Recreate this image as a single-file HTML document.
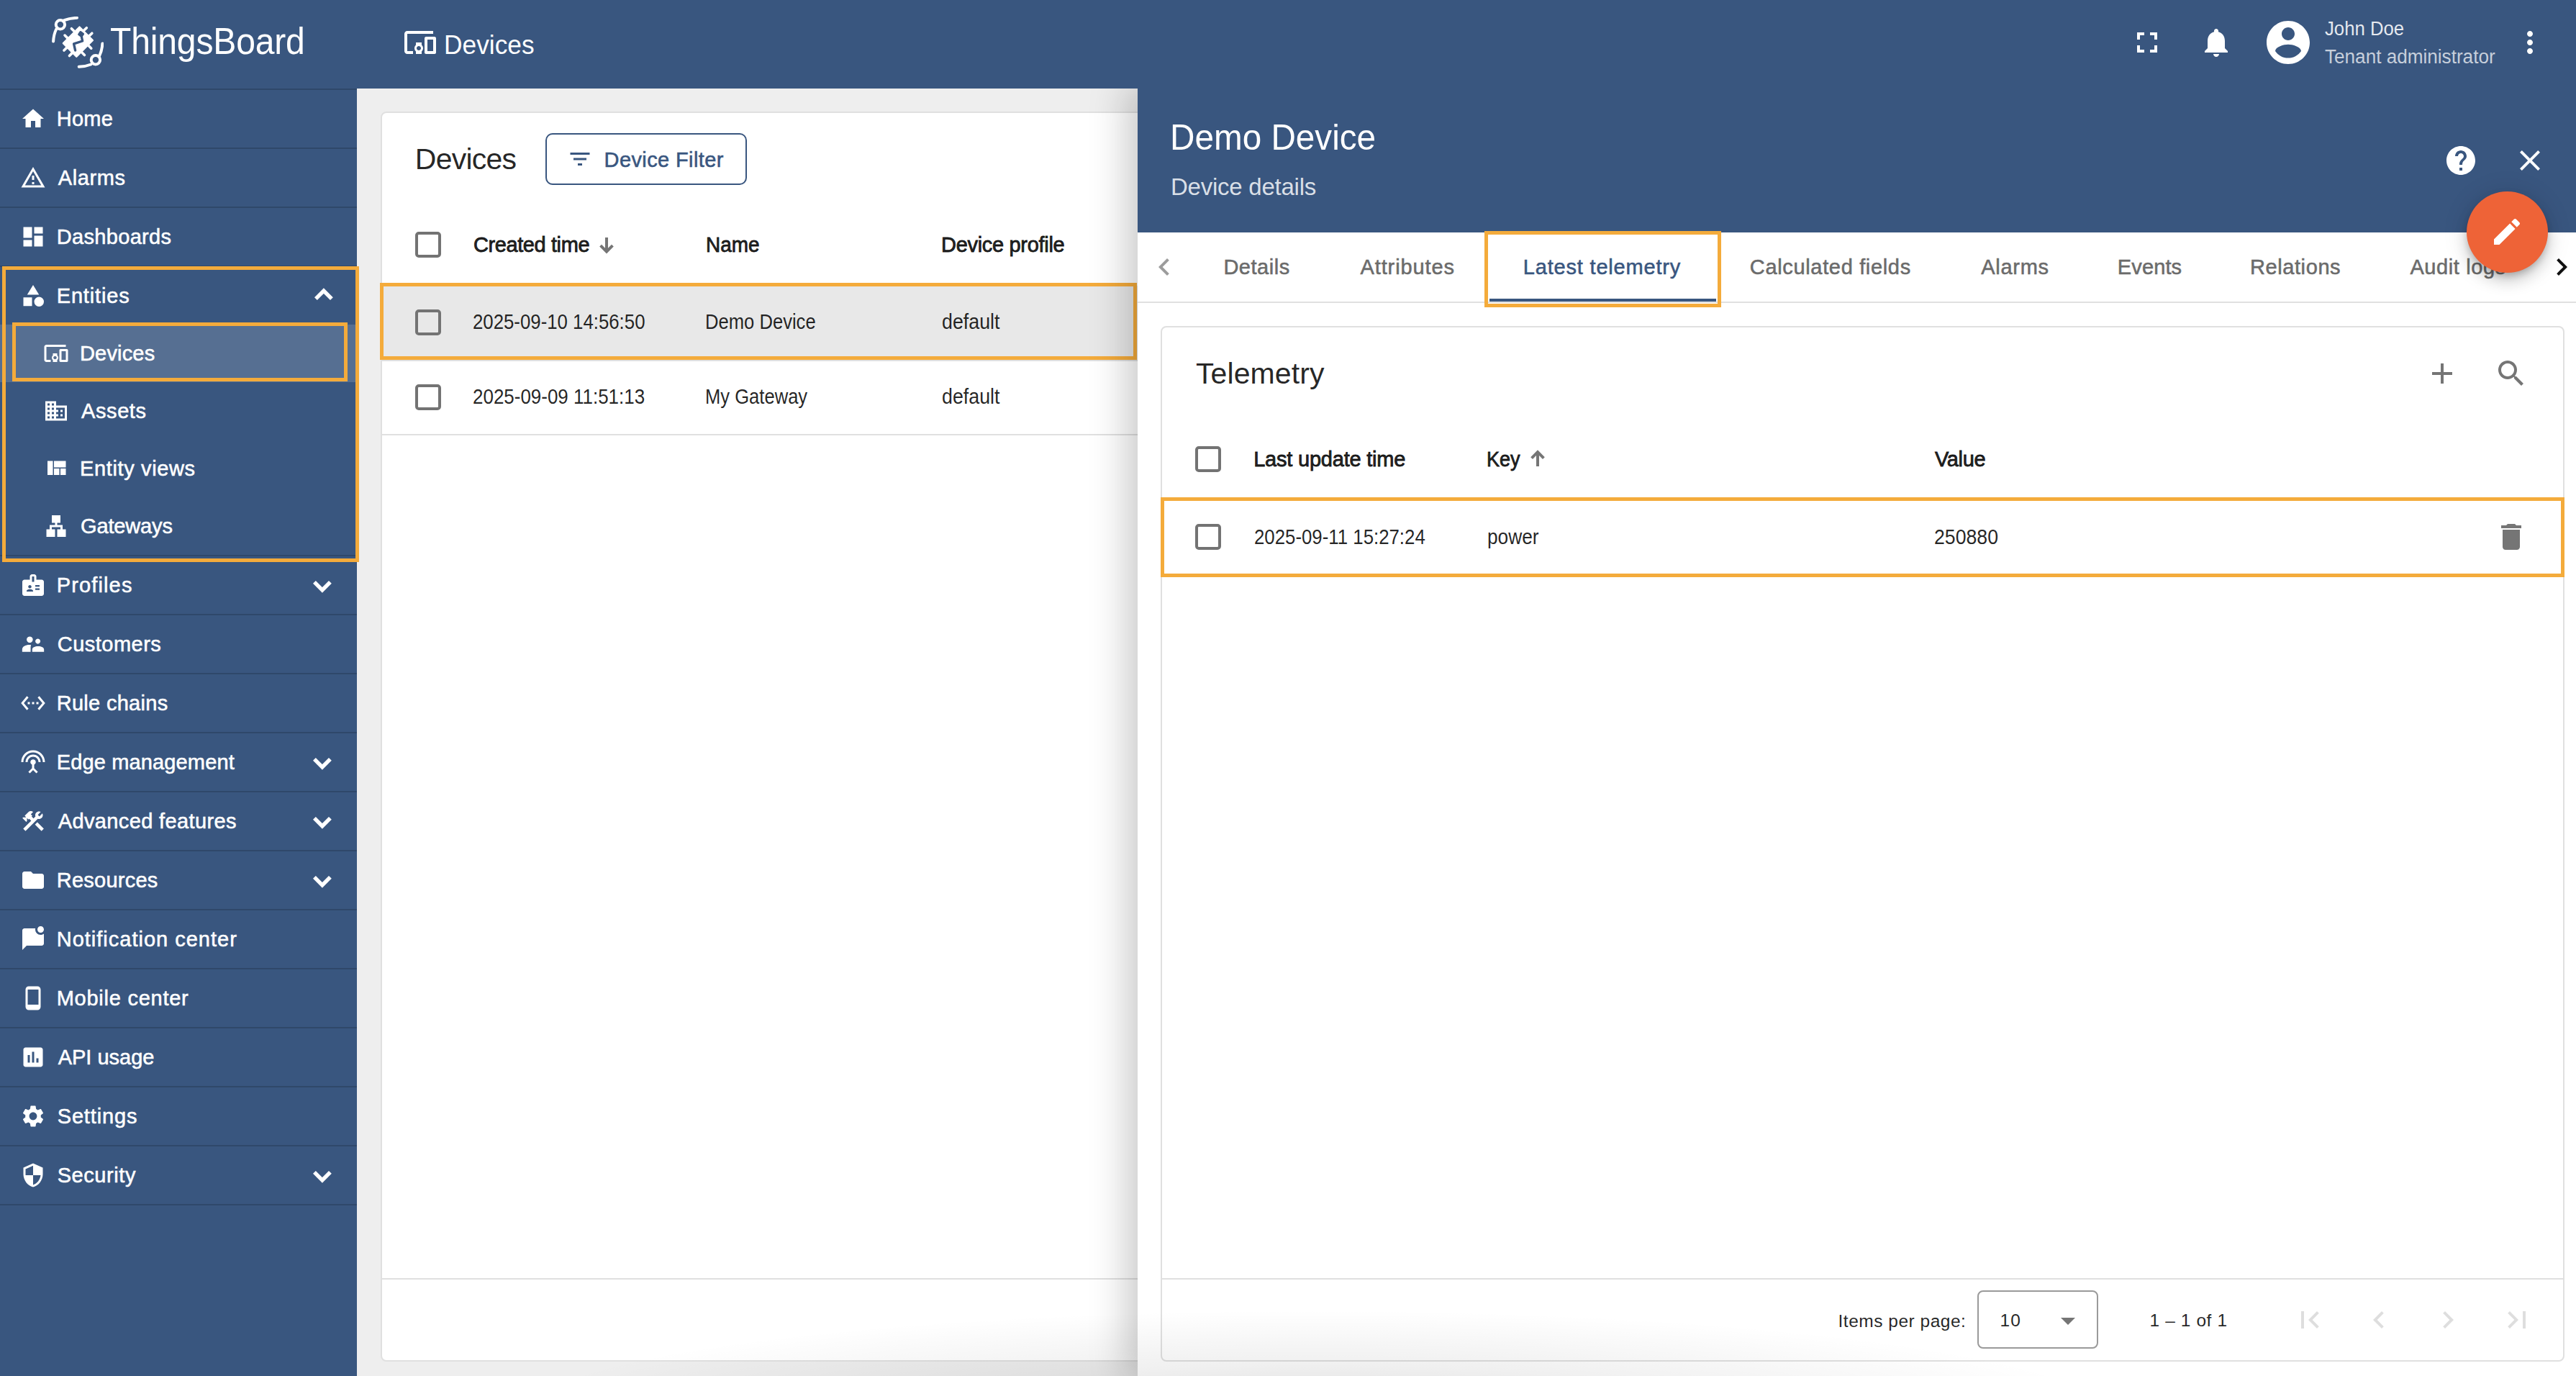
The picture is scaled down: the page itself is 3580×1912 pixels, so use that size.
<!DOCTYPE html>
<html><head><meta charset="utf-8"><title>ThingsBoard</title>
<style>
html,body{margin:0;padding:0;width:3580px;height:1912px;overflow:hidden;background:#eeeeee;}
body{position:relative;font-family:"Liberation Sans",sans-serif;}
.a{position:absolute;}
.t{position:absolute;white-space:nowrap;line-height:1;}
.med{-webkit-text-stroke:0.55px currentColor;}
.hd{-webkit-text-stroke:0.85px currentColor;}
svg{display:block;}
</style></head><body>
<div class="a" style="left:0;top:0;width:3580px;height:123px;z-index:5;">
<div class="a" style="left:0px;top:0px;width:3580px;height:123px;background:#39567f;"></div>
<svg class="a" style="left:72px;top:23px" width="72" height="72" viewBox="0 0 72 72">
<g fill="none" stroke="#fff" stroke-width="4" stroke-linecap="round">
<circle cx="11.9" cy="11.3" r="6.2"/>
<circle cx="60.9" cy="60.3" r="6.2"/>
<path d="M17.2 5.2 Q25 2.2 35 1.8"/>
<path d="M6.2 17.5 Q2.6 25 2.1 34.5"/>
<path d="M54.5 66.5 Q47 69.5 37.7 69.8"/>
<path d="M66.2 54.5 Q69.8 47 70.4 37.5"/>
</g>
<g transform="translate(36.4 35.1) rotate(-45)">
<rect x="-17.2" y="-14.2" width="34.4" height="28.4" rx="1.2" fill="#fff"/>
<g stroke="#fff" stroke-width="3.6" stroke-linecap="round">
<path d="M-6.6 -14 V-19.4 M6.6 -14 V-19.4 M-6.6 14 V19.4 M6.6 14 V19.4 M-17 -5.3 H-22.2 M-17 5.3 H-22.2 M17 -5.3 H22.2 M17 5.3 H22.2"/>
</g>
</g>
<g fill="none" stroke="#39567f" stroke-width="3.4" stroke-linejoin="round" stroke-linecap="round">
<path d="M41.2 27 L42.6 34 L30.6 37.8 L32.6 47"/>
</g>
<rect x="36.8" y="21" width="7.6" height="7" rx="1.6" transform="rotate(35 40.6 24.5)" fill="#39567f"/>
</svg>
<div class="t" style="left:153px;top:31.36px;font-size:52px;color:#fff;letter-spacing:-0.2px;transform:scaleX(0.925);transform-origin:0 0;">ThingsBoard</div>
<svg class="a" style="left:560px;top:35px;" width="48" height="48" viewBox="0 0 24 24"><path fill="#fff" d="M3 6h18V4H3c-1.1 0-2 .9-2 2v12c0 1.1.9 2 2 2h4v-2H3V6zm10 6H9v1.78c-.61.55-1 1.33-1 2.22s.39 1.67 1 2.22V20h4v-1.78c.61-.55 1-1.34 1-2.22s-.39-1.67-1-2.22V12zm-2 5.5c-.83 0-1.5-.67-1.5-1.5s.67-1.5 1.5-1.5 1.5.67 1.5 1.5-.67 1.5-1.5 1.5zM22 8h-6c-.5 0-1 .5-1 1v10c0 .5.5 1 1 1h6c.5 0 1-.5 1-1V9c0-.5-.5-1-1-1zm-1 10h-4v-8h4v8z"/></svg>
<div class="t" style="left:616.9000000000001px;top:43.88px;font-size:37px;color:#fff;transform:scaleX(0.9544);transform-origin:0 0;">Devices</div>
<svg class="a" style="left:2960px;top:35px;" width="48" height="48" viewBox="0 0 24 24"><path fill="#fff" d="M7 14H5v5h5v-2H7v-3zm-2-4h2V7h3V5H5v5zm12 7h-3v2h5v-5h-2v3zM14 5v2h3v3h2V5h-5z"/></svg>
<svg class="a" style="left:3055.6px;top:35px;" width="48" height="48" viewBox="0 0 24 24"><path fill="#fff" d="M12 22c1.1 0 2-.9 2-2h-4c0 1.1.89 2 2 2zm6-6v-5c0-3.07-1.64-5.64-4.5-6.32V4c0-.83-.67-1.5-1.5-1.5s-1.5.67-1.5 1.5v.68C7.63 5.36 6 7.92 6 11v5l-2 2v1h16v-1l-2-2z"/></svg>
<svg class="a" style="left:3144px;top:23px;" width="72" height="72" viewBox="0 0 24 24"><path fill="#fff" d="M12 2C6.48 2 2 6.48 2 12s4.48 10 10 10 10-4.48 10-10S17.52 2 12 2zm0 3c1.66 0 3 1.34 3 3s-1.34 3-3 3-3-1.34-3-3 1.34-3 3-3zm0 14.2c-2.5 0-4.71-1.28-6-3.22.03-1.99 4-3.08 6-3.08 1.99 0 5.97 1.09 6 3.08-1.29 1.94-3.5 3.22-6 3.22z"/></svg>
<div class="t" style="left:3231px;top:27.14px;font-size:27px;color:rgba(255,255,255,0.88);transform:scaleX(0.9533);transform-origin:0 0;">John Doe</div>
<div class="t" style="left:3231px;top:66.14px;font-size:27px;color:rgba(255,255,255,0.72);transform:scaleX(0.9673);transform-origin:0 0;">Tenant administrator</div>
<svg class="a" style="left:3492px;top:35px;" width="48" height="48" viewBox="0 0 24 24"><path fill="#fff" d="M12 8c1.1 0 2-.9 2-2s-.9-2-2-2-2 .9-2 2 .9 2 2 2zm0 2c-1.1 0-2 .9-2 2s.9 2 2 2 2-.9 2-2-.9-2-2-2zm0 6c-1.1 0-2 .9-2 2s.9 2 2 2 2-.9 2-2-.9-2-2-2z"/></svg>
</div>
<div class="a" style="left:0px;top:123px;width:496px;height:1789px;background:#39567f;"></div>
<div class="a" style="left:0px;top:123px;width:496px;height:2px;background:rgba(0,0,0,0.16);"></div>
<svg class="a" style="left:28px;top:147px;" width="36" height="36" viewBox="0 0 24 24"><path fill="#fff" d="M10 20v-6h4v6h5v-8h3L12 3 2 12h3v8z"/></svg>
<div class="t med" style="left:78.7px;top:151.45px;font-size:29px;color:#fff;letter-spacing:0.267px;">Home</div>
<div class="a" style="left:0px;top:205px;width:496px;height:2px;background:rgba(0,0,0,0.16);"></div>
<svg class="a" style="left:28px;top:229px;" width="36" height="36" viewBox="0 0 24 24"><path fill="#fff" d="M12 5.99L19.53 19H4.47L12 5.99M12 2L1 21h22L12 2zm1 14h-2v2h2v-2zm0-6h-2v4h2v-4z"/></svg>
<div class="t med" style="left:80.7px;top:233.45px;font-size:29px;color:#fff;letter-spacing:0.6px;">Alarms</div>
<div class="a" style="left:0px;top:287px;width:496px;height:2px;background:rgba(0,0,0,0.16);"></div>
<svg class="a" style="left:28px;top:311px;" width="36" height="36" viewBox="0 0 24 24"><path fill="#fff" d="M3 13h8V3H3v10zm0 8h8v-6H3v6zm10 0h8V11h-8v10zm0-18v6h8V3h-8z"/></svg>
<div class="t med" style="left:78.7px;top:315.45px;font-size:29px;color:#fff;letter-spacing:0.334px;">Dashboards</div>
<div class="a" style="left:0px;top:369px;width:496px;height:2px;background:rgba(0,0,0,0.16);"></div>
<svg class="a" style="left:28px;top:393px;" width="36" height="36" viewBox="0 0 24 24"><path fill="#fff" d="M12 2l-5.5 9h11zM17.5 13a4.5 4.5 0 1 0 0 9a4.5 4.5 0 1 0 0-9zM3 13.5h8v8H3z"/></svg>
<div class="t med" style="left:78.7px;top:397.45px;font-size:29px;color:#fff;letter-spacing:0.857px;">Entities</div>
<svg class="a" style="left:437px;top:400.1px" width="26" height="18" viewBox="0 0 26 18"><path d="M1.9 15.1L12.9 4.02L23.9 15.1" fill="none" stroke="#fff" stroke-width="5.4"/></svg>
<div class="a" style="left:0px;top:451px;width:496px;height:80px;background:rgba(255,255,255,0.15);"></div>
<svg class="a" style="left:60px;top:473px;" width="36" height="36" viewBox="0 0 24 24"><path fill="#fff" d="M3 6h18V4H3c-1.1 0-2 .9-2 2v12c0 1.1.9 2 2 2h4v-2H3V6zm10 6H9v1.78c-.61.55-1 1.33-1 2.22s.39 1.67 1 2.22V20h4v-1.78c.61-.55 1-1.34 1-2.22s-.39-1.67-1-2.22V12zm-2 5.5c-.83 0-1.5-.67-1.5-1.5s.67-1.5 1.5-1.5 1.5.67 1.5 1.5-.67 1.5-1.5 1.5zM22 8h-6c-.5 0-1 .5-1 1v10c0 .5.5 1 1 1h6c.5 0 1-.5 1-1V9c0-.5-.5-1-1-1zm-1 10h-4v-8h4v8z"/></svg>
<div class="t med" style="left:111px;top:477.45px;font-size:29px;color:#fff;letter-spacing:0.166px;">Devices</div>
<svg class="a" style="left:60px;top:553px;" width="36" height="36" viewBox="0 0 24 24"><path fill="#fff" d="M12 7V3H2v18h20V7H12zM6 19H4v-2h2v2zm0-4H4v-2h2v2zm0-4H4V9h2v2zm0-4H4V5h2v2zm4 12H8v-2h2v2zm0-4H8v-2h2v2zm0-4H8V9h2v2zm0-4H8V5h2v2zm10 12h-8v-2h2v-2h-2v-2h2v-2h-2V9h8v10zm-2-8h-2v2h2v-2zm0 4h-2v2h2v-2z"/></svg>
<div class="t med" style="left:113px;top:557.45px;font-size:29px;color:#fff;letter-spacing:0.6px;">Assets</div>
<svg class="a" style="left:60px;top:633px;" width="36" height="36" viewBox="0 0 24 24"><path fill="#fff" d="M10 18h5v-6h-5v6zm-6 0h5V5H4v13zm12 0h5v-6h-5v6zM10 5v6h11V5H10z"/></svg>
<div class="t med" style="left:111px;top:637.45px;font-size:29px;color:#fff;letter-spacing:0.636px;">Entity views</div>
<svg class="a" style="left:60px;top:713px;" width="36" height="36" viewBox="0 0 24 24"><path fill="#fff" d="M13 22h8v-7h-3v-4h-5V9h3V2H8v7h3v2H6v4H3v7h8v-7H8v-2h8v2h-3z"/></svg>
<div class="t med" style="left:112px;top:717.45px;font-size:29px;color:#fff;letter-spacing:-0.143px;">Gateways</div>
<div class="a" style="left:0px;top:771px;width:496px;height:2px;background:rgba(0,0,0,0.16);"></div>
<svg class="a" style="left:28px;top:795px;" width="36" height="36" viewBox="0 0 24 24"><path fill="#fff" d="M20 7h-5V4c0-1.1-.9-2-2-2h-2c-1.1 0-2 .9-2 2v3H4c-1.1 0-2 .9-2 2v11c0 1.1.9 2 2 2h16c1.1 0 2-.9 2-2V9c0-1.1-.9-2-2-2zM9 12c.83 0 1.5.67 1.5 1.5S9.83 15 9 15s-1.5-.67-1.5-1.5S8.17 12 9 12zm3 6H6v-.75c0-1 2-1.5 3-1.5s3 .5 3 1.5V18zm1-9h-2V4h2v5zm5 7.5h-4V15h4v1.5zm0-3h-4V12h4v1.5z"/></svg>
<div class="t med" style="left:78.7px;top:799.45px;font-size:29px;color:#fff;letter-spacing:1.143px;">Profiles</div>
<svg class="a" style="left:435px;top:806.8px" width="26" height="18" viewBox="0 0 26 18"><path d="M1.9 1.9L12.9 12.98L23.9 1.9" fill="none" stroke="#fff" stroke-width="5.4"/></svg>
<div class="a" style="left:0px;top:853px;width:496px;height:2px;background:rgba(0,0,0,0.16);"></div>
<svg class="a" style="left:28px;top:877px;" width="36" height="36" viewBox="0 0 24 24"><path fill="#fff" d="M8.9 4.95a2.85 2.85 0 1 0 0.001 0zM16.4 7.05a2.35 2.35 0 1 0 0.001 0zM1.9 19.2V16.9C1.9 14.3 5.1 12.7 8.5 12.7C9.1 12.7 9.6 12.75 10.1 12.85C9.85 13.4 9.7 14.2 9.7 15V19.2ZM11.2 19.2V16.9C11.2 15.2 13.6 14 16.65 14C19.7 14 22.1 15.2 22.1 16.9V19.2Z"/></svg>
<div class="t med" style="left:79.7px;top:881.45px;font-size:29px;color:#fff;letter-spacing:0.498px;">Customers</div>
<div class="a" style="left:0px;top:935px;width:496px;height:2px;background:rgba(0,0,0,0.16);"></div>
<svg class="a" style="left:28px;top:959px;" width="36" height="36" viewBox="0 0 24 24"><path fill="#fff" d="M7.77 6.76L6.23 5.48.82 12l5.41 6.52 1.54-1.28L3.42 12l4.35-5.24zM7 13h2v-2H7v2zm10-2h-2v2h2v-2zm-6 2h2v-2h-2v2zm6.77-7.52l-1.54 1.28L20.58 12l-4.35 5.24 1.54 1.28L23.18 12l-5.41-6.52z"/></svg>
<div class="t med" style="left:78.7px;top:963.45px;font-size:29px;color:#fff;letter-spacing:0.3px;">Rule chains</div>
<div class="a" style="left:0px;top:1017px;width:496px;height:2px;background:rgba(0,0,0,0.16);"></div>
<svg class="a" style="left:28px;top:1041px;" width="36" height="36" viewBox="0 0 24 24"><path fill="#fff" d="M12 5c-3.87 0-7 3.13-7 7h2c0-2.76 2.24-5 5-5s5 2.24 5 5h2c0-3.87-3.13-7-7-7zm1 9.29c.88-.39 1.5-1.26 1.5-2.29 0-1.38-1.12-2.5-2.5-2.5S9.5 10.62 9.5 12c0 1.02.62 1.9 1.5 2.29v3.3L7.59 21 9 22.41l3-3 3 3L16.41 21 13 17.59v-3.3zM12 1C5.93 1 1 5.93 1 12h2c0-4.97 4.03-9 9-9s9 4.03 9 9h2c0-6.07-4.93-11-11-11z"/></svg>
<div class="t med" style="left:78.7px;top:1045.45px;font-size:29px;color:#fff;letter-spacing:0.143px;">Edge management</div>
<svg class="a" style="left:435px;top:1052.8px" width="26" height="18" viewBox="0 0 26 18"><path d="M1.9 1.9L12.9 12.98L23.9 1.9" fill="none" stroke="#fff" stroke-width="5.4"/></svg>
<div class="a" style="left:0px;top:1099px;width:496px;height:2px;background:rgba(0,0,0,0.16);"></div>
<svg class="a" style="left:28px;top:1123px;" width="36" height="36" viewBox="0 0 24 24"><path fill="#fff" d="M13.78 15.17l2.12-2.12 6.01 6.01-2.12 2.12zM17.5 10c1.93 0 3.5-1.57 3.5-3.5 0-.58-.16-1.12-.41-1.6l-2.7 2.7-1.49-1.49 2.7-2.7c-.48-.25-1.02-.41-1.6-.41C15.57 3 14 4.57 14 6.5c0 .41.08.8.21 1.16l-1.85 1.85-1.78-1.78.71-.71-1.41-1.41L12 3.49c-1.17-1.17-3.07-1.17-4.24 0L4.22 7.03l1.41 1.41H2.81l-.71.71 3.54 3.54.71-.71V9.15l1.41 1.41.71-.71 1.78 1.78-7.41 7.41 2.12 2.12L16.34 9.79c.36.13.75.21 1.16.21z"/></svg>
<div class="t med" style="left:80.7px;top:1127.45px;font-size:29px;color:#fff;letter-spacing:0.375px;">Advanced features</div>
<svg class="a" style="left:435px;top:1134.8px" width="26" height="18" viewBox="0 0 26 18"><path d="M1.9 1.9L12.9 12.98L23.9 1.9" fill="none" stroke="#fff" stroke-width="5.4"/></svg>
<div class="a" style="left:0px;top:1181px;width:496px;height:2px;background:rgba(0,0,0,0.16);"></div>
<svg class="a" style="left:28px;top:1205px;" width="36" height="36" viewBox="0 0 24 24"><path fill="#fff" d="M10 4H4c-1.1 0-1.99.9-1.99 2L2 18c0 1.1.9 2 2 2h16c1.1 0 2-.9 2-2V8c0-1.1-.9-2-2-2h-8l-2-2z"/></svg>
<div class="t med" style="left:78.7px;top:1209.45px;font-size:29px;color:#fff;letter-spacing:0.25px;">Resources</div>
<svg class="a" style="left:435px;top:1216.8px" width="26" height="18" viewBox="0 0 26 18"><path d="M1.9 1.9L12.9 12.98L23.9 1.9" fill="none" stroke="#fff" stroke-width="5.4"/></svg>
<div class="a" style="left:0px;top:1263px;width:496px;height:2px;background:rgba(0,0,0,0.16);"></div>
<svg class="a" style="left:28px;top:1287px;" width="36" height="36" viewBox="0 0 24 24"><path fill="#fff" d="M22 6.98V16c0 1.1-.9 2-2 2H6l-4 4V4c0-1.1.9-2 2-2h10.1c-.06.32-.1.66-.1 1 0 2.76 2.24 5 5 5 1.13 0 2.16-.39 3-1.02zM16 3c0 1.66 1.34 3 3 3s3-1.34 3-3-1.34-3-3-3-3 1.34-3 3z"/></svg>
<div class="t med" style="left:78.7px;top:1291.45px;font-size:29px;color:#fff;letter-spacing:1.0px;">Notification center</div>
<div class="a" style="left:0px;top:1345px;width:496px;height:2px;background:rgba(0,0,0,0.16);"></div>
<svg class="a" style="left:28px;top:1369px;" width="36" height="36" viewBox="0 0 24 24"><path fill="#fff" d="M16 1H8C6.34 1 5 2.34 5 4v16c0 1.66 1.34 3 3 3h8c1.66 0 3-1.34 3-3V4c0-1.66-1.34-3-3-3zm1 17H7V4h10v14z"/></svg>
<div class="t med" style="left:78.7px;top:1373.45px;font-size:29px;color:#fff;letter-spacing:0.75px;">Mobile center</div>
<div class="a" style="left:0px;top:1427px;width:496px;height:2px;background:rgba(0,0,0,0.16);"></div>
<svg class="a" style="left:28px;top:1451px;" width="36" height="36" viewBox="0 0 24 24"><path fill="#fff" d="M19 3H5c-1.1 0-2 .9-2 2v14c0 1.1.9 2 2 2h14c1.1 0 2-.9 2-2V5c0-1.1-.9-2-2-2zM9 17H7v-7h2v7zm4 0h-2V7h2v10zm4 0h-2v-4h2v4z"/></svg>
<div class="t med" style="left:80.7px;top:1455.45px;font-size:29px;color:#fff;">API usage</div>
<div class="a" style="left:0px;top:1509px;width:496px;height:2px;background:rgba(0,0,0,0.16);"></div>
<svg class="a" style="left:28px;top:1533px;" width="36" height="36" viewBox="0 0 24 24"><path fill="#fff" d="M19.14 12.94c.04-.3.06-.61.06-.94 0-.32-.02-.64-.07-.94l2.03-1.58c.18-.14.23-.41.12-.61l-1.92-3.32c-.12-.22-.37-.29-.59-.22l-2.39.96c-.5-.38-1.03-.7-1.62-.94l-.36-2.54c-.04-.24-.24-.41-.48-.41h-3.84c-.24 0-.43.17-.47.41l-.36 2.54c-.59.24-1.13.57-1.62.94l-2.39-.96c-.22-.08-.47 0-.59.22L2.74 8.87c-.12.21-.08.47.12.61l2.03 1.58c-.05.3-.09.63-.09.94s.02.64.07.94l-2.03 1.58c-.18.14-.23.41-.12.61l1.92 3.32c.12.22.37.29.59.22l2.39-.96c.5.38 1.03.7 1.62.94l.36 2.54c.05.24.24.41.48.41h3.84c.24 0 .44-.17.47-.41l.36-2.54c.59-.24 1.13-.56 1.62-.94l2.39.96c.22.08.47 0 .59-.22l1.92-3.32c.12-.22.07-.47-.12-.61l-2.01-1.58zM12 15.6c-1.98 0-3.6-1.62-3.6-3.6s1.62-3.6 3.6-3.6 3.6 1.62 3.6 3.6-1.62 3.6-3.6 3.6z"/></svg>
<div class="t med" style="left:79.7px;top:1537.45px;font-size:29px;color:#fff;letter-spacing:0.857px;">Settings</div>
<div class="a" style="left:0px;top:1591px;width:496px;height:2px;background:rgba(0,0,0,0.16);"></div>
<svg class="a" style="left:28px;top:1615px;" width="36" height="36" viewBox="0 0 24 24"><path fill="#fff" d="M12 1L3 5v6c0 5.55 3.84 10.74 9 12 5.16-1.26 9-6.45 9-12V5l-9-4zm0 10.99h7c-.53 4.12-3.28 7.79-7 8.94V12H5V6.3l7-3.11v8.8z"/></svg>
<div class="t med" style="left:79.7px;top:1619.45px;font-size:29px;color:#fff;letter-spacing:0.572px;">Security</div>
<svg class="a" style="left:435px;top:1626.8px" width="26" height="18" viewBox="0 0 26 18"><path d="M1.9 1.9L12.9 12.98L23.9 1.9" fill="none" stroke="#fff" stroke-width="5.4"/></svg>
<div class="a" style="left:0px;top:1673px;width:496px;height:2px;background:rgba(0,0,0,0.16);"></div>
<div class="a" style="left:529px;top:155px;width:1200px;height:1737px;background:#fff;border:2px solid #e0e0e0;border-radius:8px;box-sizing:border-box;"></div>
<div class="t" style="left:576.8px;top:201.04px;font-size:41px;color:rgba(0,0,0,0.87);letter-spacing:-0.767px;">Devices</div>
<div class="a" style="left:758px;top:185px;width:280px;height:72px;border:2px solid #39567f;border-radius:10px;box-sizing:border-box;"></div>
<svg class="a" style="left:788.4px;top:202.7px;" width="36" height="36" viewBox="0 0 24 24"><path fill="#39567f" d="M10 18h4v-2h-4v2zM3 6v2h18V6H3zm3 7h12v-2H6v2z"/></svg>
<div class="t med" style="left:839.5999999999999px;top:207.55px;font-size:29px;color:#39567f;letter-spacing:0.382px;">Device Filter</div>
<div class="a" style="left:576.5px;top:322px;width:36px;height:36px;border:4px solid #737373;border-radius:5px;box-sizing:border-box;"></div>
<div class="t hd" style="left:658px;top:326.45px;font-size:29px;color:rgba(0,0,0,0.87);letter-spacing:-0.41px;">Created time</div>
<svg class="a" style="left:833px;top:329px" width="20" height="24" viewBox="0 0 20 24"><path d="M10 1V20M1.6 12.2L10 20.6L18.4 12.2" fill="none" stroke="#757575" stroke-width="4"/></svg>
<div class="t hd" style="left:981.0px;top:326.45px;font-size:29px;color:rgba(0,0,0,0.87);transform:scaleX(0.9626);transform-origin:0 0;">Name</div>
<div class="t hd" style="left:1308px;top:326.45px;font-size:29px;color:rgba(0,0,0,0.87);letter-spacing:-0.308px;">Device profile</div>
<div class="a" style="left:531px;top:397px;width:1050px;height:103px;background:#e8e8e8;"></div>
<div class="a" style="left:531px;top:500px;width:1050px;height:2px;background:#e0e0e0;"></div>
<div class="a" style="left:531px;top:603px;width:1050px;height:2px;background:#e0e0e0;"></div>
<div class="a" style="left:576.5px;top:430px;width:36px;height:36px;border:4px solid #737373;border-radius:5px;box-sizing:border-box;"></div>
<div class="t" style="left:657.0px;top:433.45px;font-size:29px;color:rgba(0,0,0,0.87);transform:scaleX(0.8893);transform-origin:0 0;">2025-09-10 14:56:50</div>
<div class="t" style="left:980.3000000000001px;top:433.45px;font-size:29px;color:rgba(0,0,0,0.87);transform:scaleX(0.8828);transform-origin:0 0;">Demo Device</div>
<div class="t" style="left:1309px;top:433.45px;font-size:29px;color:rgba(0,0,0,0.87);transform:scaleX(0.9242);transform-origin:0 0;">default</div>
<div class="a" style="left:576.5px;top:534px;width:36px;height:36px;border:4px solid #737373;border-radius:5px;box-sizing:border-box;"></div>
<div class="t" style="left:657.0px;top:537.45px;font-size:29px;color:rgba(0,0,0,0.87);transform:scaleX(0.8952);transform-origin:0 0;">2025-09-09 11:51:13</div>
<div class="t" style="left:980.3000000000001px;top:537.45px;font-size:29px;color:rgba(0,0,0,0.87);transform:scaleX(0.882);transform-origin:0 0;">My Gateway</div>
<div class="t" style="left:1309px;top:537.45px;font-size:29px;color:rgba(0,0,0,0.87);transform:scaleX(0.9242);transform-origin:0 0;">default</div>
<div class="a" style="left:531px;top:1776px;width:1050px;height:2px;background:#e0e0e0;"></div>
<div class="a" style="left:527.5px;top:393px;width:1052px;height:107px;border:5px solid #f4ab3b;box-sizing:border-box;"></div>
<div class="a" style="left:1581px;top:123px;width:1999px;height:1789px;background:#fff;box-shadow:-8px 0 50px 6px rgba(0,0,0,0.22);"></div>
<div class="a" style="left:1581px;top:123px;width:1999px;height:200px;background:#39567f;"></div>
<div class="t" style="left:1626px;top:165.68px;font-size:50px;color:#fff;transform:scaleX(0.9533);transform-origin:0 0;">Demo Device</div>
<div class="t" style="left:1627px;top:243.17px;font-size:33px;color:rgba(255,255,255,0.82);letter-spacing:-0.244px;">Device details</div>
<svg class="a" style="left:3396px;top:199px;" width="48" height="48" viewBox="0 0 24 24"><path fill="#fff" d="M12 2C6.48 2 2 6.48 2 12s4.48 10 10 10 10-4.48 10-10S17.52 2 12 2zm1 17h-2v-2h2v2zm2.07-7.75l-.9.92C13.45 12.9 13 13.5 13 15h-2v-.5c0-1.1.45-2.1 1.17-2.83l1.24-1.26c.37-.36.59-.86.59-1.41 0-1.1-.9-2-2-2s-2 .9-2 2H8c0-2.21 1.79-4 4-4s4 1.79 4 4c0 .88-.36 1.68-.93 2.25z"/></svg>
<svg class="a" style="left:3492.3px;top:199px;" width="48" height="48" viewBox="0 0 24 24"><path fill="#fff" d="M19 6.41L17.59 5 12 10.59 6.41 5 5 6.41 10.59 12 5 17.59 6.41 19 12 13.41 17.59 19 19 17.59 13.41 12z"/></svg>
<div class="a" style="left:1581px;top:419px;width:1999px;height:2px;background:#e0e0e0;"></div>
<svg class="a" style="left:1593.7px;top:347px;" width="48" height="48" viewBox="0 0 24 24"><path fill="#9c9c9c" d="M15.41 7.41L14 6l-6 6 6 6 1.41-1.41L10.83 12z"/></svg>
<div class="t med" style="left:1700.4px;top:356.83px;font-size:29px;color:#6b6b6b;letter-spacing:0.534px;">Details</div>
<div class="t med" style="left:1890.5px;top:356.83px;font-size:29px;color:#6b6b6b;letter-spacing:0.889px;">Attributes</div>
<div class="t med" style="left:2116.8px;top:356.83px;font-size:29px;color:#39567f;letter-spacing:0.813px;">Latest telemetry</div>
<div class="t med" style="left:2431.8px;top:356.83px;font-size:29px;color:#6b6b6b;letter-spacing:0.661px;">Calculated fields</div>
<div class="t med" style="left:2753.2px;top:356.83px;font-size:29px;color:#6b6b6b;letter-spacing:0.72px;">Alarms</div>
<div class="t med" style="left:2942.8px;top:356.83px;font-size:29px;color:#6b6b6b;letter-spacing:0.12px;">Events</div>
<div class="t med" style="left:3126.8999999999996px;top:356.83px;font-size:29px;color:#6b6b6b;letter-spacing:0.603px;">Relations</div>
<div class="t med" style="left:3349.4px;top:356.83px;font-size:29px;color:#6b6b6b;letter-spacing:0.6px;">Audit logs</div>
<div class="a" style="left:2070px;top:415px;width:315px;height:4px;background:#39567f;"></div>
<div class="a" style="left:3525px;top:323px;width:55px;height:96px;background:#fff;"></div>
<svg class="a" style="left:3536px;top:347px;" width="48" height="48" viewBox="0 0 24 24"><path fill="#111" d="M10 6L8.59 7.41 13.17 12l-4.58 4.59L10 18l6-6z"/></svg>
<div class="a" style="left:2063px;top:321px;width:329px;height:106px;border:5px solid #f4ab3b;box-sizing:border-box;"></div>
<div class="a" style="left:3428px;top:266px;width:113px;height:113px;background:#ee6337;border-radius:50%;box-shadow:0 6px 10px -2px rgba(0,0,0,.2),0 12px 20px 0 rgba(0,0,0,.14),0 2px 36px 0 rgba(0,0,0,.12);"></div>
<svg class="a" style="left:3460px;top:298px;" width="48" height="48" viewBox="0 0 24 24"><path fill="#fff" d="M3 17.25V21h3.75L17.81 9.94l-3.75-3.75L3 17.25zM20.71 7.04c.39-.39.39-1.02 0-1.41l-2.34-2.34c-.39-.39-1.02-.39-1.41 0l-1.83 1.83 3.75 3.75 1.83-1.83z"/></svg>
<div class="a" style="left:1613px;top:453px;width:1951px;height:1439px;border:2px solid #e0e0e0;border-radius:8px;box-sizing:border-box;"></div>
<div class="t" style="left:1662px;top:499.24px;font-size:41px;color:rgba(0,0,0,0.87);letter-spacing:0.1px;">Telemetry</div>
<svg class="a" style="left:3370px;top:495px;" width="48" height="48" viewBox="0 0 24 24"><path fill="#757575" d="M19 13h-6v6h-2v-6H5v-2h6V5h2v6h6v2z"/></svg>
<svg class="a" style="left:3466px;top:495px;" width="48" height="48" viewBox="0 0 24 24"><path fill="#757575" d="M15.5 14h-.79l-.28-.27C15.41 12.59 16 11.11 16 9.5 16 5.91 13.09 3 9.5 3S3 5.91 3 9.5 5.91 16 9.5 16c1.61 0 3.09-.59 4.23-1.57l.27.28v.79l5 4.99L20.49 19l-4.99-5zm-6 0C7.01 14 5 11.99 5 9.5S7.01 5 9.5 5 14 7.01 14 9.5 11.99 14 9.5 14z"/></svg>
<div class="a" style="left:1661px;top:620px;width:36px;height:36px;border:4px solid #737373;border-radius:5px;box-sizing:border-box;"></div>
<div class="t hd" style="left:1742.2px;top:623.98px;font-size:29px;color:rgba(0,0,0,0.87);letter-spacing:-0.213px;">Last update time</div>
<div class="t hd" style="left:2065.5px;top:623.98px;font-size:29px;color:rgba(0,0,0,0.87);transform:scaleX(0.9318);transform-origin:0 0;">Key</div>
<svg class="a" style="left:2126.5px;top:625px" width="20" height="24" viewBox="0 0 20 24"><path d="M10 23V4M1.6 11.6L10 3.2L18.4 11.6" fill="none" stroke="#757575" stroke-width="4"/></svg>
<div class="t hd" style="left:2689px;top:623.98px;font-size:29px;color:rgba(0,0,0,0.87);letter-spacing:-0.35px;">Value</div>
<div class="a" style="left:1661px;top:728px;width:36px;height:36px;border:4px solid #737373;border-radius:5px;box-sizing:border-box;"></div>
<div class="t" style="left:1742.6px;top:731.52px;font-size:29px;color:rgba(0,0,0,0.87);transform:scaleX(0.89);transform-origin:0 0;">2025-09-11 15:27:24</div>
<div class="t" style="left:2066.5px;top:731.52px;font-size:29px;color:rgba(0,0,0,0.87);transform:scaleX(0.9063);transform-origin:0 0;">power</div>
<div class="t" style="left:2688px;top:731.52px;font-size:29px;color:rgba(0,0,0,0.87);transform:scaleX(0.9194);transform-origin:0 0;">250880</div>
<svg class="a" style="left:3466px;top:722px;" width="48" height="48" viewBox="0 0 24 24"><path fill="#757575" d="M6 19c0 1.1.9 2 2 2h8c1.1 0 2-.9 2-2V7H6v12zM19 4h-3.5l-1-1h-5l-1 1H5v2h14V4z"/></svg>
<div class="a" style="left:1613px;top:691px;width:1951px;height:111px;border:5px solid #f4ab3b;box-sizing:border-box;"></div>
<div class="a" style="left:1615px;top:1776px;width:1948px;height:2px;background:#e0e0e0;"></div>
<div class="t" style="left:2554.5px;top:1824.16px;font-size:24.5px;color:rgba(0,0,0,0.87);letter-spacing:0.513px;">Items per page:</div>
<div class="a" style="left:2748px;top:1793px;width:168px;height:81px;border:2px solid #9a9a9a;border-radius:8px;box-sizing:border-box;"></div>
<div class="t" style="left:2779.5px;top:1823.16px;font-size:24.5px;color:rgba(0,0,0,0.87);letter-spacing:1.0px;">10</div>
<svg class="a" style="left:2850.4px;top:1811px;" width="48" height="48" viewBox="0 0 24 24"><path fill="#757575" d="M7 10l5 5 5-5z"/></svg>
<div class="t" style="left:2987.5px;top:1823.16px;font-size:24.5px;color:rgba(0,0,0,0.87);letter-spacing:0.6px;">1 – 1 of 1</div>
<svg class="a" style="left:3186px;top:1809.6px;" width="48" height="48" viewBox="0 0 24 24"><path fill="#dedede" d="M18.41 16.59L13.82 12l4.59-4.59L17 6l-6 6 6 6zM6 6h2v12H6z"/></svg>
<svg class="a" style="left:3282px;top:1809.6px;" width="48" height="48" viewBox="0 0 24 24"><path fill="#dedede" d="M15.41 7.41L14 6l-6 6 6 6 1.41-1.41L10.83 12z"/></svg>
<svg class="a" style="left:3378px;top:1809.6px;" width="48" height="48" viewBox="0 0 24 24"><path fill="#dedede" d="M10 6L8.59 7.41 13.17 12l-4.58 4.59L10 18l6-6z"/></svg>
<svg class="a" style="left:3474px;top:1809.6px;" width="48" height="48" viewBox="0 0 24 24"><path fill="#dedede" d="M5.59 7.41L10.18 12l-4.59 4.59L7 18l6-6-6-6zM16 6h2v12h-2z"/></svg>
<div class="a" style="left:3px;top:369.5px;width:495.5px;height:411.5px;border:5px solid #f4ab3b;box-sizing:border-box;"></div>
<div class="a" style="left:17px;top:448px;width:466px;height:82px;border:5px solid #f4ab3b;box-sizing:border-box;"></div>
<div class="a" style="left:700px;top:1760px;width:2250px;height:300px;background:radial-gradient(ellipse 50% 50% at 50% 70%, rgba(0,0,0,0.15), rgba(0,0,0,0.06) 50%, rgba(0,0,0,0) 100%);z-index:6;"></div>
</body></html>
